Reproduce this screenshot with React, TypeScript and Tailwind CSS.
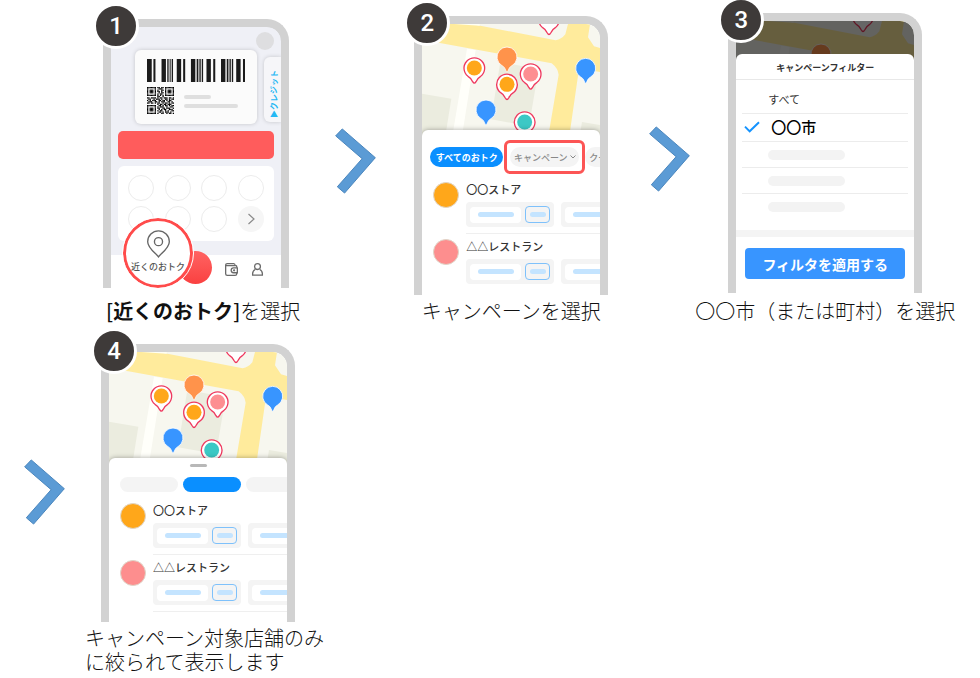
import type { ReactNode } from "react";

const BARS = [
  [172, 14], [191, 6], [215, 13], [232, 4], [239, 3], [245, 4], [260, 13], [279, 6],
  [302, 13], [319, 5], [327, 4], [334, 4], [348, 13], [368, 6], [391, 13], [408, 5],
  [416, 4], [423, 4], [436, 13], [456, 6],
];

const QR = [
  "#######.##.##.#######",
  "#.....#..###..#.....#",
  "#.###.#.#..##.#.###.#",
  "#.###.#.##.#..#.###.#",
  "#.###.#..#.##.#.###.#",
  "#.....#.#.##..#.....#",
  "#######.#.#.#.#######",
  "........##..#........",
  "##.####.#.##.###.##.#",
  ".##..#.###.#..##.#.##",
  "#.#.###..##.##.#.##..",
  ".###..##.#.###..##.#.",
  "##.##.#.##..#.##.#.##",
  "........#.##.##.###..",
  "#######..##.#.##.#.##",
  "#.....#.#.###..#..##.",
  "#.###.#.##..##.###..#",
  "#.###.#..#.#.##..###.",
  "#.###.#.#.##..#.#..##",
  "#.....#..##.#.###.#..",
  "#######.#..##..#.##.#",
];

function Badge({ n }: { n: number }) {
  return (
    <span className="absolute -left-[10px] -top-4 z-10 flex size-[46px] items-center justify-center rounded-full border-3 border-white bg-[#3e3a39] font-['Roboto',sans-serif] text-2xl leading-none font-medium text-white">
      {n}
    </span>
  );
}

function Phone({ n, className, children }: { n: number; className: string; children: ReactNode }) {
  return (
    <div className={"relative " + className}>
      <Badge n={n} />
      <div className="overflow-hidden rounded-t-[22px] border-8 border-b-0 border-[#d2d2d2] bg-[#d2d2d2]">
        <div className="overflow-hidden rounded-t-[14px] bg-white">{children}</div>
      </div>
    </div>
  );
}

function Arrow({ className }: { className: string }) {
  return (
    <svg aria-hidden="true" viewBox="44 53 124 198" className={"h-[66px] w-[41px] shrink-0 " + className}>
      <path d="M66 55 166 142 73 249 51 230 126 145 46 76Z" fill="#5b9bd5" stroke="#4a86bd" strokeWidth="3" />
    </svg>
  );
}

function Pin({ x, y, dot }: { x: number; y: number; dot?: string }) {
  return (
    <g transform={`translate(${x} ${y})`}>
      <path
        d="M-5 41C-9 31-12 29-19 25A31 31 0 1 1 19 25C12 29 9 31 5 41Q0 50-5 41Z"
        fill="#fff"
        stroke="#ef3a60"
        strokeWidth="4"
      />
      {dot && <circle r="22.5" fill={dot} />}
    </g>
  );
}

function SolidPin({ x, y, fill }: { x: number; y: number; fill: string }) {
  return (
    <path
      transform={`translate(${x} ${y})`}
      d="M0 45C-2 45-4 39-6 35S-10 29-15 26A30 30 0 1 1 15 26C10 29 8 31 6 35S2 45 0 45Z"
      fill={fill}
      stroke="#fff"
      strokeWidth="2.5"
    />
  );
}

function TownMap({ className }: { className: string }) {
  return (
    <svg aria-hidden="true" viewBox="67 72 534 336" preserveAspectRatio="xMidYMin slice" className={"block w-full " + className}>
      <path d="M67 72H601V408H67Z" fill="#f7f7ef" />
      <path d="M67 281 155 296 137 408H67Z" fill="#ebecdf" />
      <path d="M302 186 417 207 388 378 274 358Z" fill="#ebecdf" />
      <path d="M547 366 601 375V408H540Z" fill="#ebecdf" />
      <path d="M202 146 228 150 187 408H158Z" fill="#fffffa" />
      <path d="M67 72H215L468 121Q485 118 497 103L505 72H571L565 112 583 139 601 144V216L545 206Q539 206 537 214L509 408H446L477 224Q475 205 456 190L67 119Z" fill="#ffeb9c" />
      <path d="M163 72H240V77Z" fill="#fffff4" />
      <Pin x={448} y={58} />
      <Pin x={224} y={204} dot="#ffa71a" />
      <SolidPin x={322} y={171} fill="#ff934b" />
      <Pin x={322} y={253} dot="#ffa71a" />
      <Pin x={393} y={222} dot="#fd8e91" />
      <SolidPin x={558} y={205} fill="#3895ff" />
      <SolidPin x={259} y={330} fill="#3895ff" />
      <Pin x={375} y={366} dot="#3cc8c5" />
    </svg>
  );
}

function Coupon() {
  return (
    <div className="flex h-[25px] w-[88px] shrink-0 items-center gap-1 rounded bg-[#f4f4f4] px-1">
      <div className="flex h-4 w-[51px] items-center justify-center rounded-sm bg-white">
        <span className="h-[5px] w-9 rounded-full bg-[#c4e4ff]" />
      </div>
      <div className="flex h-[17px] w-[25px] items-center justify-center rounded border border-[#7ec1fb]">
        <span className="h-[5px] w-4 rounded-full bg-[#c4e4ff]" />
      </div>
    </div>
  );
}

function Shop({ name, color, line }: { name: string; color: string; line: string }) {
  return (
    <li className="flex gap-[7px] pl-[11px]">
      <span className={"mt-[5px] size-[26px] shrink-0 rounded-full border border-[#dfd5c8] " + color} />
      <div className={"min-w-0 flex-1 overflow-hidden border-b pt-[5px] pb-1.5 " + line}>
        <p className="text-[11px] leading-[14px] font-medium text-[#333]">{name}</p>
        <div className="mt-1.5 flex gap-[7px]">
          <Coupon />
          <Coupon />
        </div>
      </div>
    </li>
  );
}

function Shops({ lastLine }: { lastLine: string }) {
  return (
    <ul>
      <Shop name="〇〇ストア" color="bg-[#ffa71a]" line="border-[#efefef]" />
      <Shop name="△△レストラン" color="bg-[#fd8e8e]" line={lastLine} />
    </ul>
  );
}

function Sheet({ className, children }: { className: string; children: ReactNode }) {
  return (
    <div className={"relative -mt-1.5 overflow-hidden rounded-t-md bg-white " + className}>{children}</div>
  );
}

function PayScreen() {
  return (
    <div className="bg-[#eff0f6]">
      <div className="flex justify-end pt-[5px] pr-[7px]">
        <span className="size-[18px] rounded-full bg-[#dedee0]" />
      </div>
      <div className="flex items-start justify-between pl-6">
        <div className="h-[74px] w-[122px] rounded-md bg-[#fbfbfb] px-3 pt-[9px] shadow-[0_0_4px_rgba(0,0,0,0.18)]">
          <svg aria-hidden="true" viewBox="172 0 290 23" preserveAspectRatio="none" className="h-[23px] w-full" fill="#1b1b1b">
            {BARS.map(([x, w]) => (
              <rect key={x} x={x} width={w} height="23" />
            ))}
          </svg>
          <div className="mt-[5px] flex gap-[10px]">
            <svg aria-hidden="true" viewBox="0 0 21 21" className="size-[27px]">
              {QR.flatMap((row, y) =>
                [...row].map((c, x) => (c === "#" ? <rect key={x + "-" + y} x={x} y={y} width="1" height="1" /> : null)),
              )}
            </svg>
            <div className="pt-2">
              <div className="h-1 w-[27px] rounded-full bg-[#dfdfdf]" />
              <div className="mt-[5px] h-1 w-[54px] rounded-full bg-[#dfdfdf]" />
            </div>
          </div>
        </div>
        <button className="mt-[7px] flex h-[65px] w-[17px] flex-col items-center justify-end rounded-l-md bg-[#f6f6f9] pb-1 pl-[3px] text-[8px] leading-none font-bold text-[#25b8f4] shadow-[0_0_4px_rgba(0,0,0,0.18)]">
          <span className="rotate-180 [text-orientation:sideways] [writing-mode:vertical-rl]">クレジット</span>
          <span>▲</span>
        </button>
      </div>
      <div className="mx-[7px] mt-[7px] h-7 rounded-[5px] bg-[#ff5c5c]" />
      <div className="mx-[7px] mt-[7px] grid grid-cols-[repeat(4,26px)] justify-between gap-y-[5px] rounded-md bg-white px-[10px] pt-[9px] pb-[9px]">
        {[0, 1, 2, 3, 4, 5, 6].map((i) => (
          <span key={i} className="size-[26px] rounded-full border border-[#ececec]" />
        ))}
        <button aria-label="もっと見る" className="flex size-[26px] items-center justify-center rounded-full bg-[#f6f6f6]">
          <svg viewBox="0 0 12 12" className="size-3" fill="none" stroke="#8a8a8a" strokeWidth="1.2">
            <path d="M3.5 1 9 6 3.5 11" />
          </svg>
        </button>
      </div>
      <div className="relative mt-[14px] flex h-[33px] items-center gap-[13px] bg-white pr-[18px] pl-[68px]">
        <span className="-mt-2 size-[33px] shrink-0 rounded-full bg-linear-to-b from-[#ff6262] to-[#fa4040]" />
        <button aria-label="ウォレット" className="-mt-1">
          <svg viewBox="0 0 40 40" className="size-[13px]" fill="none" stroke="#6a6a6a" strokeWidth="4">
            <path d="M36 14V10Q36 8 33 8H5Q2 8 2 5V33Q2 38 7 38H31Q36 38 36 34V31M2 6Q2 2 7 2H27Q31 2 31 8" />
            <path d="M38 15H26Q19 15 19 22.500T26 30H38Z" />
            <circle cx="28" cy="22.500" r="1.500" />
          </svg>
        </button>
        <button aria-label="アカウント" className="-mt-1">
          <svg viewBox="0 0 40 40" className="size-[13px]" fill="none" stroke="#6a6a6a" strokeWidth="4">
            <circle cx="20" cy="11" r="9" />
            <path d="M13 20Q5 24 5 33V37H35V33Q35 24 27 20" />
          </svg>
        </button>
        <button className="absolute bottom-0 left-3 flex size-[70px] flex-col items-center rounded-full border-3 border-[#ff4b4b] bg-white pt-[9px] outline-1 outline-white">
          <svg aria-hidden="true" viewBox="0 0 68 82" className="h-[28px] w-[23px] shrink-0" fill="none" stroke="#666" strokeWidth="4">
            <path d="M34 79C28 70 2 53 2 34A32 32 0 0 1 66 34C66 53 40 70 34 79Z" />
            <circle cx="34" cy="34" r="12" />
          </svg>
          <span className="mt-[3px] text-[9px] leading-3 font-medium whitespace-nowrap text-[#555]">近くのおトク</span>
        </button>
      </div>
    </div>
  );
}

function CampaignScreen() {
  return (
    <>
      <TownMap className="h-28" />
      <Sheet className="pt-[10px] pb-1 shadow-[0_0_5px_rgba(0,0,0,0.35)]">
        <div className="mb-[3px] flex items-center pl-2 text-[9px] leading-none whitespace-nowrap">
          <button className="h-5 w-[73px] shrink-0 rounded-full bg-[#0a8fff] font-bold text-white">すべてのおトク</button>
          <div className="ml-px shrink-0 rounded-md border-3 border-[#fc5555] p-1 px-[3px]">
            <button className="flex h-5 w-[69px] items-center justify-center gap-[2px] rounded-full bg-[#f4f4f4] font-medium text-[#888]">
              キャンペーン
              <svg aria-hidden="true" viewBox="0 0 6 4" className="h-1 w-1.5" fill="none" stroke="#888">
                <path d="M.5 .5 3 3 5.500 .5" />
              </svg>
            </button>
          </div>
          <button className="h-5 w-14 shrink-0 rounded-full bg-[#f4f4f4] pl-1 text-left font-medium text-[#888]">クーポン</button>
        </div>
        <Shops lastLine="border-white" />
      </Sheet>
    </>
  );
}

function FilterScreen() {
  return (
    <>
      <div className="relative">
        <TownMap className="h-[39px]" />
        <div className="absolute inset-0 bg-black/60" />
      </div>
      <Sheet className="pb-3.5">
        <h2 className="border-b border-[#e8e8e8] pt-[6px] pb-[3px] text-center text-[9px] leading-4 font-bold text-[#333]">
          キャンペーンフィルター
        </h2>
        <ul className="mx-[6px]">
          <li className="border-b border-[#ececec] pt-[11px] pb-[6px] pl-[26px] text-[11px] leading-4 text-[#333]">すべて</li>
          <li className="flex items-center gap-[11px] border-b border-[#ececec] pt-[3px] pb-1 pl-[2px] text-[15px] leading-5 font-medium text-black">
            <svg aria-hidden="true" viewBox="0 0 48 36" className="h-3 w-4" fill="none" stroke="#1593ff" strokeWidth="6">
              <path d="M3 17 17 31 45 4" />
            </svg>
            〇〇市
          </li>
          <li className="border-b border-[#ececec] pt-2 pb-[7px] pl-[26px]">
            <div className="h-[10px] w-[77px] rounded-full bg-[#f3f3f3]" />
          </li>
          <li className="border-b border-[#ececec] pt-2 pb-[7px] pl-[26px]">
            <div className="h-[10px] w-[77px] rounded-full bg-[#f3f3f3]" />
          </li>
          <li className="pt-2 pb-[18px] pl-[26px]">
            <div className="h-[10px] w-[77px] rounded-full bg-[#f3f3f3]" />
          </li>
        </ul>
        <div className="h-[7px] bg-[#f4f4f4]" />
        <div className="px-[9px] pt-[11px]">
          <button className="h-[31px] w-full rounded-sm bg-[#3895ff] text-sm leading-none font-bold whitespace-nowrap text-white">
            フィルタを適用する
          </button>
        </div>
      </Sheet>
    </>
  );
}

function ResultScreen() {
  return (
    <>
      <TownMap className="h-28" />
      <Sheet className="pt-[6px] pb-[10px] shadow-[0_0_5px_rgba(0,0,0,0.35)]">
        <div className="mx-auto h-[3px] w-[17px] rounded-full bg-[#b8b8b8]" />
        <div className="mt-[10px] mb-1.5 flex gap-[5px] pl-[11px]">
          <span className="h-[15px] w-[58px] shrink-0 rounded-full bg-[#f4f4f4]" />
          <span className="h-[15px] w-[58px] shrink-0 rounded-full bg-[#0a8fff]" />
          <span className="h-[15px] w-[58px] shrink-0 rounded-full bg-[#f4f4f4]" />
        </div>
        <Shops lastLine="border-[#efefef]" />
      </Sheet>
    </>
  );
}

const CAPTION = "text-xl leading-6 font-light text-[#111]";

export default function App() {
  return (
    <main className="min-h-screen overflow-x-auto bg-white font-['Noto_Sans_CJK_JP',sans-serif]">
      <section className="flex pl-[103px]">
        <figure className="flex flex-col pt-[19px]">
          <Phone n={1} className="w-[186px]">
            <PayScreen />
          </Phone>
          <figcaption className={"mt-auto pt-1 pl-[3px] whitespace-nowrap " + CAPTION}>
            <span className="font-medium">[</span>
            <b className="font-bold">近くのおトク</b>
            <span className="font-medium">]</span>を選択
          </figcaption>
        </figure>
        <Arrow className="mt-32 ml-[35px]" />
        <figure className="ml-[38px] flex flex-col items-center pt-4">
          <Phone n={2} className="w-[194px]">
            <CampaignScreen />
          </Phone>
          <figcaption className={"mt-auto pt-1 whitespace-nowrap " + CAPTION}>キャンペーンを選択</figcaption>
        </figure>
        <Arrow className="mt-[126px] ml-[41px]" />
        <figure className="ml-[5px] flex flex-col items-center pt-[13px]">
          <Phone n={3} className="w-[194px]">
            <FilterScreen />
          </Phone>
          <figcaption className={"mt-auto pt-1 whitespace-nowrap " + CAPTION}>〇〇市（または町村）を選択</figcaption>
        </figure>
      </section>
      <section className="flex pt-[21px] pl-6">
        <Arrow className="mt-[115px]" />
        <figure className="ml-5 flex flex-col items-start">
          <Phone n={4} className="ml-4 w-[194px]">
            <ResultScreen />
          </Phone>
          <figcaption className={"pt-1 " + CAPTION}>
            キャンペーン対象店舗のみ
            <br />
            に絞られて表示します
          </figcaption>
        </figure>
      </section>
    </main>
  );
}
